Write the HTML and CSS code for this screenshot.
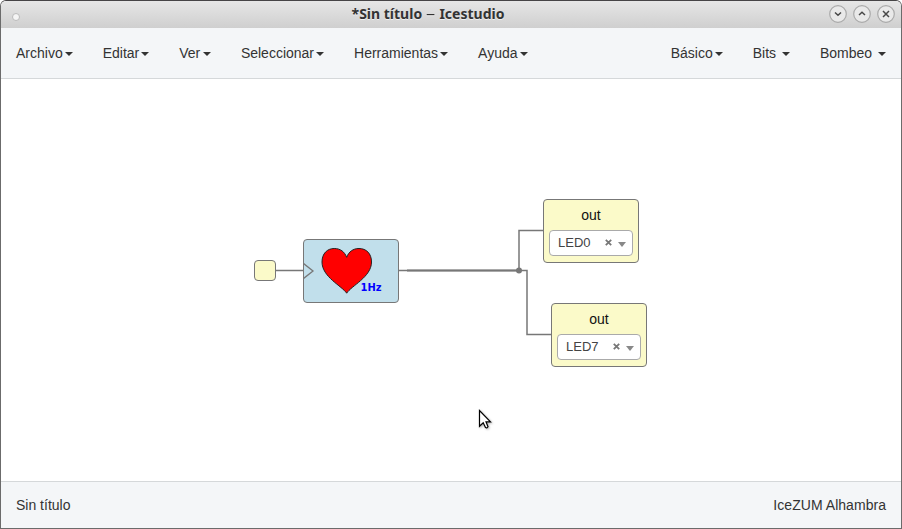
FILE: index.html
```html
<!DOCTYPE html>
<html lang="es">
<head>
<meta charset="utf-8">
<title>Icestudio</title>
<link rel="stylesheet" href="styles.css">
</head>
<body>
<div class="window">
  <header class="titlebar">
    <span class="window-dot"></span>
    <h1 class="window-title">*Sin título <span class="dash">–</span> Icestudio</h1>
    <div class="window-controls">
      <svg width="18" height="18" viewBox="0 0 18 18"><circle class="ring" cx="9" cy="9" r="8.3"/><path class="glyph" d="M6 7.500l3 2.800L12 7.500"/></svg>
      <svg width="18" height="18" viewBox="0 0 18 18"><circle class="ring" cx="9" cy="9" r="8.3"/><path class="glyph" d="M6 10l3-2.800 3 2.800"/></svg>
      <svg width="18" height="18" viewBox="0 0 18 18"><circle class="ring" cx="9" cy="9" r="8.3"/><path class="glyph" d="M6 6l6 6M12 6l-6 6"/></svg>
    </div>
  </header>
  <nav class="navbar">
    <ul class="menu">
      <li class="item">Archivo<i class="caret"></i></li>
      <li class="item">Editar<i class="caret"></i></li>
      <li class="item item-view">Ver<i class="caret"></i></li>
      <li class="item">Seleccionar<i class="caret"></i></li>
      <li class="item">Herramientas<i class="caret"></i></li>
      <li class="item">Ayuda<i class="caret"></i></li>
    </ul>
    <ul class="menu">
      <li class="item">Básico<i class="caret"></i></li>
      <li class="item">Bits <i class="caret"></i></li>
      <li class="item">Bombeo <i class="caret"></i></li>
    </ul>
  </nav>
  <main class="canvas">
    <svg class="wires" width="900" height="402" viewBox="1 79 900 402">
      <path d="M275 270.5H304M398 270.5H519V230.5H544M398 270.5H527V334.5H552"/>
      <path class="trunk" d="M407 270.5H519"/>
      <circle cx="519" cy="270.5" r="3"/>
    </svg>
    <div class="port"></div>
    <div class="block heart">
      <svg width="94" height="62" viewBox="304 240 94 62">
        <path class="clock" d="M303.500 263.500L313 271L303.500 278.500"/>
        <path class="shape" d="M346.700 293.200C342 286 322 277 322 262C322 253.500 327.300 248.500 334.200 248.500C340.500 248.500 344.500 251.800 346.700 257.300C348.700 251.800 353 248.500 359 248.500C366.300 248.500 371.500 253.500 371.500 262C371.500 277 351 286 346.700 293.200Z"/>
        <text class="freq" x="360.5" y="291" textLength="21" lengthAdjust="spacingAndGlyphs">1Hz</text>
      </svg>
    </div>
    <div class="block output led0">
      <span class="label">out</span>
      <div class="select"><span class="value">LED0</span><svg class="clear" width="7" height="7" viewBox="0 0 7 7"><path d="M.8.8l5.400 5.400M6.200.8L.8 6.200"/></svg><i class="arrow"></i></div>
    </div>
    <div class="block output led7">
      <span class="label">out</span>
      <div class="select"><span class="value">LED7</span><svg class="clear" width="7" height="7" viewBox="0 0 7 7"><path d="M.8.8l5.400 5.400M6.200.8L.8 6.200"/></svg><i class="arrow"></i></div>
    </div>
    <svg class="cursor" width="16" height="22" viewBox="0 0 16 22"><path d="M1.500 1.500V17.300L5.200 13.800L7.500 18.500Q9 19.500 10 17.800L8 12.800H12.500Z"/></svg>
  </main>
  <footer class="statusbar"><span>Sin título</span><span class="board">IceZUM Alhambra</span></footer>
</div>
</body>
</html>
```
FILE: styles.css
```css
* { box-sizing: border-box; }
body {
  margin: 0;
  background: #fff;
  color: #333;
  font: 14px/20px "Liberation Sans", Arial, sans-serif;
}
.window {
  display: flex;
  flex-direction: column;
  width: 902px;
  height: 529px;
  overflow: hidden;
  border: 1px solid #6b6b6b;
  border-top-color: #464446;
  border-radius: 6px 6px 0 0;
}
.titlebar {
  display: grid;
  grid-template-columns: 80px 1fr 80px;
  align-items: center;
  height: 27px;
  background: linear-gradient(#e6e6e6, #cfcfcf);
}
.window-dot {
  width: 8px;
  height: 8px;
  margin: 5px 0 0 11px;
  border: 1px solid #bbb;
  border-radius: 50%;
  background: #f5f5f5;
}
.window-title {
  margin: 0 0 1px;
  padding-right: 46px;
  text-align: center;
  font: 700 14px/20px "Noto Sans", "Open Sans", sans-serif;
  letter-spacing: 0;
  text-shadow: 0 1px #eee;
  white-space: nowrap;
}
.dash { display: inline-block; margin: 0 1.5px; font-weight: 400; transform: scaleX(1.3); }
.window-controls {
  display: flex;
  justify-content: flex-end;
  gap: 6px;
  padding-right: 6px;
  margin-top: -1px;
}
.ring { fill: #e9e9e9; stroke: #aaa; stroke-width: 1.2; }
.glyph { fill: none; stroke: #484848; stroke-width: 1.5; }
.navbar {
  display: flex;
  justify-content: space-between;
  height: 51px;
  border-bottom: 1px solid #d5d8da;
  background: #f4f6f8;
}
.menu { display: flex; margin: 0; padding: 0; list-style: none; }
.item { padding: 15px; white-space: pre; }
.item-view .caret { margin-left: 2.6px; }
.caret {
  display: inline-block;
  margin-left: 2px;
  vertical-align: middle;
  border-top: 4px solid #333;
  border-right: 4px solid transparent;
  border-left: 4px solid transparent;
}
.canvas { position: relative; flex: 1; background: #fff; }
.wires { position: absolute; inset: 0; }
.wires path { fill: none; stroke: #777; stroke-width: 1.5; }
.wires .trunk { stroke-width: 2; }
.wires circle { fill: #777; }
.port, .block { position: absolute; border: 1px solid #777; border-radius: 4px; }
.port { left: 253px; top: 181px; width: 22px; height: 21px; background: #fbfac9; }
.block { width: 96px; height: 64px; }
.heart { left: 302px; top: 160px; background: #c1dfeb; }
.heart svg { display: block; }
.clock { fill: none; stroke: #777; stroke-width: 1.3; }
.shape { fill: #f00; stroke: #222; stroke-width: 1; }
.freq { fill: #00f; font: bold 11px "DejaVu Sans", sans-serif; }
.output { padding: 5px; background: #fbfac9; text-align: center; color: #111; }
.led0 { left: 542px; top: 120px; }
.led7 { left: 550px; top: 224px; }
.label { display: block; }
.select {
  display: flex;
  align-items: center;
  height: 26px;
  margin-top: 5px;
  padding: 0 6px 0 8px;
  border: 1px solid #aaa;
  border-radius: 4px;
  background: #fff;
  color: #444;
  font-size: 13px;
}
.value { flex: 1; text-align: left; }
.clear { margin: -1px 6px 0 0; }
.clear path { stroke: #777; stroke-width: 1.8; }
.arrow {
  margin-top: 2px;
  border-top: 5px solid #888;
  border-right: 4px solid transparent;
  border-left: 4px solid transparent;
}
.cursor { position: absolute; left: 477px; top: 330px; filter: drop-shadow(1px 1px 1px rgba(0, 0, 0, .3)); }
.cursor path { fill: #fff; stroke: #000; stroke-width: 1.2; }
.statusbar {
  display: flex;
  justify-content: space-between;
  height: 47px;
  padding: 13px 15px;
  border-top: 1px solid #d5d8da;
  background: #f4f6f8;
}
.board { letter-spacing: .04px; }
```
